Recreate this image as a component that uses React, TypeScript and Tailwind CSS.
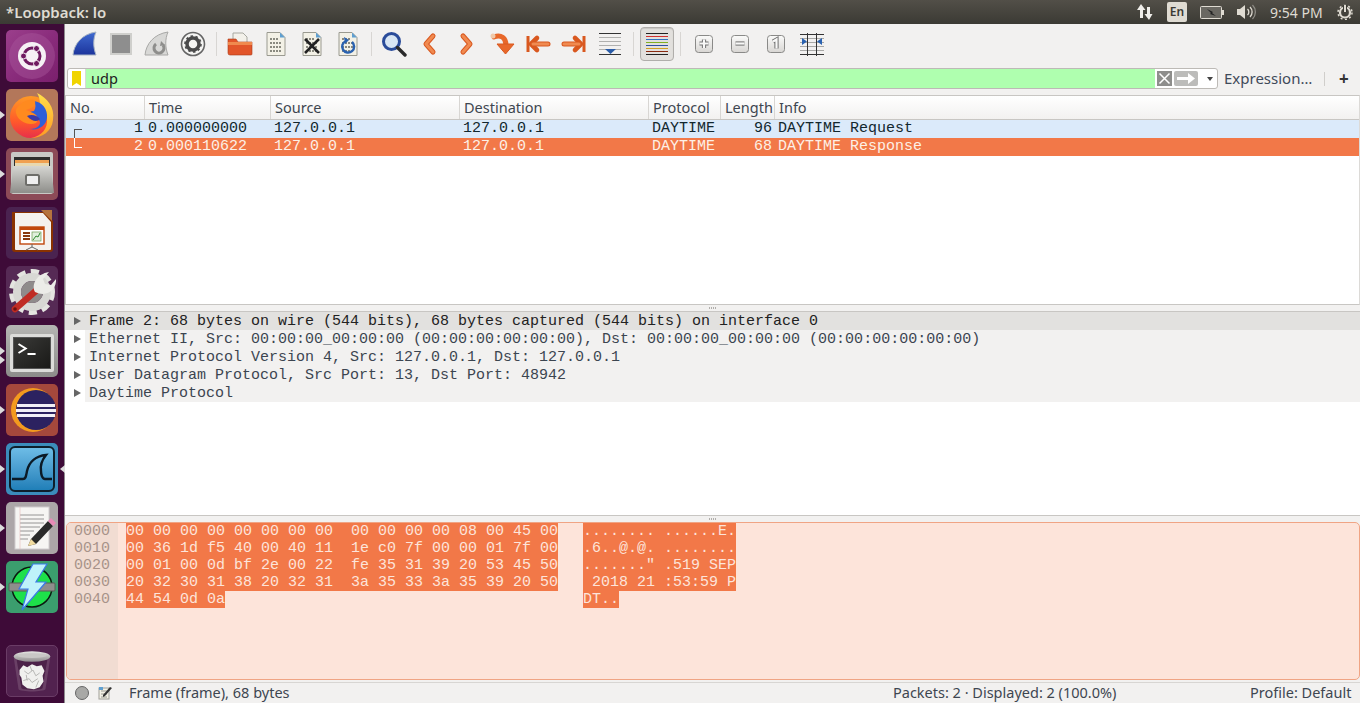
import type { ReactNode } from "react";

const ui = "font-['Noto_Sans',sans-serif]";
const mono = "font-['Liberation_Mono',monospace]";

function Tile({ bg, markL, markR, double, children }: { bg: string; markL?: boolean; markR?: boolean; double?: boolean; children: ReactNode }) {
  return (
    <div className="relative h-[52px] w-[52px] ml-[6px] shrink-0">
      <div className={`h-full w-full rounded-[5px] overflow-hidden ${bg}`}>{children}</div>
      {markL && (
        <span className={`absolute -left-[6px] top-[22px] flex flex-col gap-[1px]`}>
          <span className="block h-0 w-0 border-y-[4px] border-l-[5px] border-y-transparent border-l-[#dcdcdc]" />
          {double && <span className="block h-0 w-0 border-y-[4px] border-l-[5px] border-y-transparent border-l-[#dcdcdc]" />}
        </span>
      )}
      {markR && <span className="absolute -right-[7px] top-[22px] block h-0 w-0 border-y-[4px] border-r-[5px] border-y-transparent border-r-[#dcdcdc]" />}
    </div>
  );
}

function Launcher() {
  return (
    <div className="w-[65px] shrink-0 bg-[#3e0b38] border-r border-[#8e8a8e] flex flex-col gap-[7px] pt-[6px] pb-[6px]">
      <Tile bg="bg-gradient-to-br from-[#9b3f8c] via-[#8a2c7c] to-[#7a1f6c]">
        <svg viewBox="0 0 52 52" className="h-full w-full">
          <circle cx="26" cy="26" r="23" fill="#a9569c" opacity=".45" />
          <circle cx="26" cy="26" r="14" fill="#f6f1f5" />
          <circle cx="26" cy="26" r="8" fill="none" stroke="#6f1a60" strokeWidth="3" />
          <circle cx="17.5" cy="26" r="3" fill="#6f1a60" stroke="#f6f1f5" />
          <circle cx="30.5" cy="18.5" r="3" fill="#6f1a60" stroke="#f6f1f5" />
          <circle cx="30.5" cy="33.5" r="3" fill="#6f1a60" stroke="#f6f1f5" />
        </svg>
      </Tile>
      <Tile bg="bg-[#b3775a]" markL>
        <svg viewBox="0 0 52 52" className="h-full w-full">
          <defs>
            <linearGradient id="ff" x1="0" y1="0" x2="0" y2="1">
              <stop offset="0" stopColor="#ff9a24" />
              <stop offset=".6" stopColor="#ff5a2a" />
              <stop offset="1" stopColor="#e8304a" />
            </linearGradient>
            <linearGradient id="ffy" x1="0" y1="0" x2="0" y2="1">
              <stop offset="0" stopColor="#ffe14a" />
              <stop offset="1" stopColor="#ff9a24" />
            </linearGradient>
          </defs>
          <circle cx="25" cy="28" r="21" fill="url(#ff)" />
          <path d="M31 4c10 5 18 14 16 27-1 11-11 18-22 18 11-2 17-10 16-19-1-6-4-10-7-12 0-5 0-9-3-14z" fill="url(#ffy)" />
          <path d="M28 12c8 1 14 8 13 17-1 8-9 13-17 11 8 0 12-5 9-9-3-3-8-3-12-1-1-4 2-8 7-8 2-3 2-7 0-10z" fill="#2f5fd8" />
          <path d="M15 15c3-3 8-5 13-4 3 3 0 7-3 8l-5 2 7 3c5 2 6 7 3 10-7 3-18-1-20-10-1-4 2-7 5-9z" fill="#ff8a1f" />
          <path d="M21 27c4-2 10-1 13 3-2 3-8 3-13-3z" fill="#3a3aa8" />
        </svg>
      </Tile>
      <Tile bg="bg-[#8c4a57]" markL>
        <svg viewBox="0 0 52 52" className="h-full w-full">
          <defs>
            <linearGradient id="cab" x1="0" y1="0" x2="0" y2="1">
              <stop offset="0" stopColor="#d6d6d2" />
              <stop offset="1" stopColor="#8e8e8a" />
            </linearGradient>
          </defs>
          <rect x="5" y="4" width="42" height="42" rx="2" fill="#c9c9c5" />
          <rect x="8" y="9" width="36" height="12" fill="#2e2e2c" />
          <rect x="9" y="12" width="34" height="3" fill="#f0a050" />
          <rect x="9" y="15" width="34" height="3" fill="#e8d8b0" />
          <path d="M7 18h38l3 27H4z" fill="url(#cab)" />
          <rect x="20" y="27" width="13" height="10" rx="1.5" fill="#efefef" stroke="#6e6e6a" strokeWidth="2" />
        </svg>
      </Tile>
      <Tile bg="bg-[#4a2350]">
        <svg viewBox="0 0 52 52" className="h-full w-full">
          <path d="M6 5h33l8 9v28a3 3 0 0 1-3 3H9a3 3 0 0 1-3-3z" fill="#8a3200" />
          <path d="M9 6h28l8 9v27a1 1 0 0 1-1 1H10a1 1 0 0 1-1-1z" fill="#f4f1ee" />
          <path d="M35 3h11v11z" fill="#b5733e" />
          <rect x="14" y="20" width="24" height="17" fill="#fff" stroke="#c0470c" strokeWidth="1.4" />
          <rect x="14" y="20" width="24" height="3" fill="#c0470c" />
          <path d="M17 26h7M17 29h7M17 32h7" stroke="#8a3a10" strokeWidth="2" />
          <rect x="26" y="25" width="9" height="9" fill="#e0efdc" stroke="#6a9a50" strokeWidth=".7" />
          <path d="M27 33l3-4 2 1 2-4" fill="none" stroke="#2f8a2f" />
          <path d="M26 37v3m0 0l-6 3m6-3l6 3" stroke="#666" />
        </svg>
      </Tile>
      <Tile bg="bg-[#562a55]">
        <svg viewBox="0 0 52 52" className="h-full w-full">
          <circle cx="26" cy="26" r="20" fill="none" stroke="#e4e4e0" strokeWidth="6" strokeDasharray="8 5.2" />
          <circle cx="26" cy="26" r="15" fill="none" stroke="#d8d8d4" strokeWidth="8" />
          <circle cx="26" cy="26" r="11" fill="#8f8b8b" />
          <path d="M9 43l23-20" stroke="#c02c24" strokeWidth="6.5" strokeLinecap="round" />
          <path d="M29 26c-4-8 2-18 14-20l-6 7 2 5 6 1 5-6c1 10-9 19-21 13z" fill="#ecece8" />
          <circle cx="9" cy="43" r="1.8" fill="#6a1210" />
        </svg>
      </Tile>
      <Tile bg="bg-gradient-to-b from-[#b5b5b3] to-[#8c8c8a]" markL double>
        <div className="m-[4px] mt-[9px] h-[38px] rounded-[2px] bg-[#dcdcda] p-[3px]">
          <div className="h-full w-full bg-gradient-to-br from-[#3a3a38] to-[#1a1a18] relative border border-[#555]">
            <svg viewBox="0 0 40 28" className="h-full w-full">
              <path d="M5 4l8 5-8 5" fill="none" stroke="#fff" strokeWidth="2.2" />
              <path d="M15 15h9" stroke="#fff" strokeWidth="2.2" />
            </svg>
          </div>
        </div>
      </Tile>
      <Tile bg="bg-[#a5483c]" markL>
        <svg viewBox="0 0 52 52" className="h-full w-full">
          <circle cx="27" cy="26" r="22" fill="#f39a1e" />
          <circle cx="30" cy="26" r="20" fill="#2c2260" />
          <path d="M11 20h38v3H11zM10 25h40v3H10zM11 30h38v3H11z" fill="#f1eff5" />
        </svg>
      </Tile>
      <Tile bg="bg-[#3b8cbb]" markL markR>
        <div className="m-[3px] h-[46px] rounded-[6px] bg-gradient-to-b from-[#6dbce6] to-[#1f7fb8] border-[2px] border-[#0d1f2c]">
          <svg viewBox="0 0 42 42" className="h-full w-full">
            <path d="M1 31h11c3 0 3-3 4-8 2-9 9-15 19-16-4 5-6 10-5 16 0 3 1 8 4 8h7" fill="none" stroke="#0b1a26" strokeWidth="2.4" />
          </svg>
        </div>
      </Tile>
      <Tile bg="bg-[#aca6a8]" markL>
        <svg viewBox="0 0 52 52" className="h-full w-full">
          <rect x="9" y="5" width="34" height="42" fill="#f6f5f3" stroke="#d0ccce" />
          <path d="M14 13h24M14 17h24M14 21h24M14 25h20M14 29h14M14 33h10M14 37h8" stroke="#8a8a8a" strokeWidth=".9" />
          <path d="M14 5v42" stroke="#e8b8b8" strokeWidth=".6" />
          <path d="M25 37L42 19l5 5-17 18-8 2z" fill="#2a2a2a" />
          <path d="M42 19l3-3 5 5-3 3z" fill="#e88ab8" />
          <path d="M25 37l5 5-8 2z" fill="#f2dca0" />
        </svg>
      </Tile>
      <Tile bg="bg-[#3b9e6e]" markL>
        <svg viewBox="0 0 52 52" className="h-full w-full">
          <circle cx="26" cy="26" r="20" fill="#1ee04a" stroke="#0a1a10" strokeWidth="1.5" />
          <rect x="3" y="22" width="46" height="8" rx="1" fill="#8e8e8c" stroke="#5a5a58" />
          <path d="M27 3h14L30 21h10L16 49l6-21H13z" fill="#bff2fa" stroke="#3a7ae8" strokeWidth="1.2" />
        </svg>
      </Tile>
      <div className="mt-auto">
        <Tile bg="bg-[#52224f] border border-[#6a3c66]">
          <svg viewBox="0 0 52 52" className="h-full w-full">
            <defs>
              <linearGradient id="rim" x1="0" y1="0" x2="0" y2="1">
                <stop offset="0" stopColor="#e6e6e4" />
                <stop offset="1" stopColor="#8e8a8c" />
              </linearGradient>
            </defs>
            <path d="M7 12l5 33c2 3 26 3 28 0l5-33z" fill="#6a4066" />
            <path d="M10 14l5 30c2 2 20 2 22 0l5-30z" fill="#4c2249" />
            <ellipse cx="26" cy="11" rx="19" ry="5.5" fill="url(#rim)" />
            <ellipse cx="26" cy="10" rx="15" ry="2.5" fill="#c9c7c6" />
            <path d="M13 25l4-5 4 2 5-3 5 2 5-1 3 6-2 5 1 6-4 6-6 2-7-1-5-4-1-7-2-3z" fill="#f0f0ee" />
            <path d="M18 26l4 3 5-4 3 6 4-3M17 36l6-2 3 4 6-4M24 21l2 5M33 36l-3 7M20 30l1 6" stroke="#b5b5b3" fill="none" />
          </svg>
        </Tile>
      </div>
    </div>
  );
}

function Sep({ w }: { w: string }) {
  return (
    <div className={`${w} flex justify-center shrink-0`}>
      <div className="h-[24px] w-px bg-[#d8d6d3]" />
    </div>
  );
}

function Btn({ children, active }: { children: ReactNode; active?: boolean }) {
  return (
    <div className="w-9 shrink-0 flex justify-center">
      <div className={`h-[34px] w-[34px] flex items-center justify-center rounded-[4px] ${active ? "border border-[#b0aeab] bg-[#e2e0dd] shadow-[inset_0_1px_1px_#c8c6c3]" : ""}`}>
        {children}
      </div>
    </div>
  );
}

function Ico({ children, size = 26 }: { children: ReactNode; size?: number }) {
  return (
    <svg width={size} height={size} viewBox={`0 0 ${size} ${size}`}>
      {children}
    </svg>
  );
}

// double stroke gives the outlined orange look of the nav arrows
function NavStroke({ d }: { d: string }) {
  return (
    <>
      <path d={d} fill="none" stroke="#d9581f" strokeWidth="5" strokeLinecap="round" strokeLinejoin="round" />
      <path d={d} fill="none" stroke="#f08a50" strokeWidth="3" strokeLinecap="round" strokeLinejoin="round" />
    </>
  );
}

function DocIcon({ children }: { children?: ReactNode }) {
  return (
    <Ico>
      <path d="M4 1.5h13l5 5v18H4z" fill="#f3f1e6" stroke="#9a9a90" />
      <path d="M17 1.5l5 5h-5z" fill="#5f9fd0" />
      <path d="M7 8h9M7 12h12M7 16h12M7 20h12" stroke="#8a8a80" strokeWidth="2" strokeDasharray="2 1" />
      {children}
    </Ico>
  );
}

function SmallKey({ d }: { d: string }) {
  return (
    <Ico size={20}>
      <defs>
        <linearGradient id="key" x1="0" y1="0" x2="0" y2="1">
          <stop offset="0" stopColor="#fbfbfa" />
          <stop offset="1" stopColor="#d8d6d3" />
        </linearGradient>
      </defs>
      <rect x="1.5" y="1.5" width="17" height="17" rx="3" fill="url(#key)" stroke="#8a8a88" />
      <path d={d} fill="none" stroke="#707070" strokeWidth="4.2" />
      <path d={d} fill="none" stroke="#f8f8f7" strokeWidth="2.2" />
    </Ico>
  );
}

function Toolbar() {
  return (
    <div className="h-[44px] shrink-0 flex items-center pl-[2px] pb-[4px] bg-[#f2f1f0]">
      <Btn>
        <Ico>
          <defs>
            <linearGradient id="sh" x1="0" y1="0" x2="0" y2="1">
              <stop offset="0" stopColor="#3f6ad0" />
              <stop offset="1" stopColor="#1c349c" />
            </linearGradient>
          </defs>
          <path d="M1 24C2 13 10 3 24 1c-3 7-3 15 0 23z" fill="url(#sh)" stroke="#a8b4c4" />
        </Ico>
      </Btn>
      <Btn>
        <div className="h-[22px] w-[22px] bg-[#8e8e8e] border-2 border-[#cfcfcc]" />
      </Btn>
      <Btn>
        <Ico>
          <path d="M1 24C2 13 10 3 24 1c-3 7-3 15 0 23z" fill="#d8d8d6" stroke="#a8a8a6" />
          <path d="M12 13a5 5 0 1 0 7 1" fill="none" stroke="#8e8e8c" strokeWidth="3" />
          <path d="M17 10l4 4-5 1z" fill="#8e8e8c" />
        </Ico>
      </Btn>
      <Btn>
        <Ico>
          <circle cx="13" cy="13" r="11.5" fill="#f5f5f3" stroke="#666" strokeWidth="1.6" />
          <circle cx="13" cy="13" r="6" fill="none" stroke="#4a4a4a" strokeWidth="3.5" />
          <circle cx="13" cy="13" r="8" fill="none" stroke="#4a4a4a" strokeWidth="1.6" strokeDasharray="2.5 2.5" />
        </Ico>
      </Btn>
      <Sep w="w-[11px]" />
      <Btn>
        <Ico>
          <path d="M6 2h10l4 4v8H6z" fill="#f3f1ea" stroke="#a8a8a0" />
          <path d="M1 8h8l2 3h14v12a1 1 0 0 1-1 1H3a2 2 0 0 1-2-2z" fill="#e2562a" stroke="#a83a18" strokeWidth=".6" />
          <path d="M1 11h24v3H1z" fill="#f08a4e" />
        </Ico>
      </Btn>
      <Btn>
        <DocIcon />
      </Btn>
      <Btn>
        <DocIcon>
          <path d="M6 8l14 14M20 8L6 22" stroke="#222" strokeWidth="2.6" />
        </DocIcon>
      </Btn>
      <Btn>
        <DocIcon>
          <path d="M17 11a6 6 0 1 1-6-1" fill="none" stroke="#2a62b0" strokeWidth="2.4" />
          <path d="M9 6l5 3-4 4z" fill="#2a62b0" />
        </DocIcon>
      </Btn>
      <Sep w="w-[10px]" />
      <Btn>
        <Ico>
          <circle cx="10.5" cy="10.5" r="8" fill="#d8e6f4" stroke="#2a4c9a" strokeWidth="3" />
          <path d="M16.5 16.5L24 24" stroke="#2a2a2a" strokeWidth="3.4" strokeLinecap="round" />
        </Ico>
      </Btn>
      <Btn>
        <Ico>
          <NavStroke d="M16 5l-7 8 7 8" />
        </Ico>
      </Btn>
      <Btn>
        <Ico>
          <NavStroke d="M10 5l7 8-7 8" />
        </Ico>
      </Btn>
      <Btn>
        <Ico>
          <path d="M5 6c7-3 12 1 12 8" fill="none" stroke="#e8682a" strokeWidth="5" strokeLinecap="round" />
          <path d="M8 13h17l-8.500 10z" fill="#e8682a" stroke="#d9581f" strokeLinejoin="round" />
          <circle cx="4" cy="5" r="2.5" fill="#f0c8a8" />
        </Ico>
      </Btn>
      <Btn>
        <Ico>
          <path d="M3 5v16" stroke="#d9581f" strokeWidth="3" />
          <path d="M12 7l-6 6 6 6" fill="none" stroke="#d9581f" strokeWidth="4.6" strokeLinejoin="round" strokeLinecap="round" />
          <NavStroke d="M8 13h15" />
        </Ico>
      </Btn>
      <Btn>
        <Ico>
          <path d="M23 5v16" stroke="#d9581f" strokeWidth="3" />
          <path d="M14 7l6 6-6 6" fill="none" stroke="#d9581f" strokeWidth="4.6" strokeLinejoin="round" strokeLinecap="round" />
          <NavStroke d="M3 13h15" />
        </Ico>
      </Btn>
      <Btn>
        <Ico>
          <path d="M2 2.5h22" stroke="#333" />
          <path d="M2 6.5h22M2 10.5h22M2 14.5h22M2 18.5h22" stroke="#b0b0ae" />
          <path d="M2 23.5h22" stroke="#333" />
          <path d="M8 18h11l-5.5 5z" fill="#2a5ca8" />
        </Ico>
      </Btn>
      <Sep w="w-[11px]" />
      <Btn active>
        <Ico>
          <path d="M2 2.500h22" stroke="#222" />
          <path d="M2 5.500h22" stroke="#d03030" />
          <path d="M2 8.500h22" stroke="#3070c0" />
          <path d="M2 11.500h22" stroke="#80b020" />
          <path d="M2 14.500h22" stroke="#3050a0" />
          <path d="M2 17.500h22" stroke="#d0a020" />
          <path d="M2 20.500h22" stroke="#8a2a10" />
          <path d="M2 23.500h22" stroke="#222" />
        </Ico>
      </Btn>
      <Sep w="w-[11px]" />
      <Btn>
        <SmallKey d="M10 5.500v8.500M5.500 9.500h9" />
      </Btn>
      <Btn>
        <SmallKey d="M5.500 9.500h9" />
      </Btn>
      <Btn>
        <SmallKey d="M7 7.500l3.500-2v9" />
      </Btn>
      <Btn>
        <Ico>
          <path d="M1 3.5h24" stroke="#333" />
          <path d="M1 7.500h24M1 11.500h24M1 15.500h24M1 19.500h24" stroke="#a8a8a6" />
          <path d="M1 23.500h24" stroke="#333" />
          <path d="M8.5 2v23M17.5 2v23" stroke="#333" />
          <path d="M3 7v7l5-3.5zM23 7v7l-5-3.5z" fill="#2a62b0" />
        </Ico>
      </Btn>
    </div>
  );
}

function FilterBar() {
  return (
    <div className={`h-[21px] shrink-0 flex items-center pl-[2px] bg-[#f2f1f0] ${ui}`}>
      <div className="h-[21px] w-[1151px] shrink-0 flex items-stretch rounded-[3px] border border-[#bdbab6] bg-white overflow-hidden">
        <div className="w-[18px] shrink-0 flex items-center justify-center border-r border-[#d8d8d8]">
          <svg width="9" height="15" viewBox="0 0 9 15">
            <path d="M0 0h9v15l-4.5-3L0 15z" fill="#f0d400" />
          </svg>
        </div>
        <div className="w-[1069px] shrink-0 bg-[#afffaf] pl-[5px] text-[14.500px] leading-[19px] text-[#222]">udp</div>
        <div className="flex items-center pl-[2px]">
          <div className="h-[15px] w-[15px] bg-[#8e8e8c] flex items-center justify-center">
            <svg width="13" height="13" viewBox="0 0 13 13">
              <path d="M1.5 1.5l10 10M11.5 1.5l-10 10" stroke="#fff" strokeWidth="1.5" />
            </svg>
          </div>
          <div className="ml-[2px] h-[15px] w-[24px] rounded-[2px] bg-[#bcbcba] flex items-center justify-center">
            <svg width="18" height="11" viewBox="0 0 18 11">
              <path d="M0 4h11V0l7 5.5-7 5.5V7H0z" fill="#fff" />
            </svg>
          </div>
          <div className="ml-[9px] h-0 w-0 border-x-[3px] border-t-[4px] border-x-transparent border-t-[#444]" />
        </div>
      </div>
      <span className="ml-[6px] w-[100px] shrink-0 text-[15px] text-[#3f4a5a] whitespace-nowrap">Expression…</span>
      <div className="h-[14px] w-px bg-[#d0cecb]" />
      <span className="ml-[14px] text-[17px] font-bold leading-none text-[#333]">+</span>
    </div>
  );
}

const cols = "grid grid-cols-[79px_126px_189px_189px_72px_54px_1fr]";

const packets = [
  { no: "1", time: "0.000000000", proto: "DAYTIME", len: "96", info: "DAYTIME Request", cls: "bg-[#dbeafa] text-[#12272e]" },
  { no: "2", time: "0.000110622", proto: "DAYTIME", len: "68", info: "DAYTIME Response", cls: "bg-[#f27848] text-[#fdf0e6]" },
];

function PacketList() {
  const heads = ["No.", "Time", "Source", "Destination", "Protocol", "Length", "Info"];
  return (
    <div className="h-[210px] shrink-0 bg-white border border-[#c8c6c3] border-r-[#dcdad7] relative">
      <div className={`${cols} h-[24px] bg-gradient-to-b from-white to-[#f2f1f0] border-b border-[#c8c6c3] ${ui}`}>
        {heads.map((h, i) => (
          <div key={h} className={`pl-[4px] text-[14.500px] leading-[22px] text-[#3e4650] overflow-hidden whitespace-nowrap ${i < 6 ? "border-r border-[#d8d6d3]" : ""}`}>
            {h}
          </div>
        ))}
      </div>
      {packets.map((p) => (
        <div key={p.no} className={`${cols} h-[18px] text-[15px] leading-[18px] whitespace-pre ${mono} ${p.cls}`}>
          <div className="text-right pr-[2px]">{p.no}</div>
          <div className="pl-[3px]">{p.time}</div>
          <div className="pl-[3px]">127.0.0.1</div>
          <div className="pl-[3px]">127.0.0.1</div>
          <div className="pl-[3px]">{p.proto}</div>
          <div className="text-right pr-[3px]">{p.len}</div>
          <div className="pl-[3px]">{p.info}</div>
        </div>
      ))}
      <div className="absolute left-[8px] top-[33px] h-[9px] w-[8px] border-l border-t border-[#555]" />
      <div className="absolute left-[8px] top-[42px] h-[10px] w-[8px] border-l border-b border-white" />
    </div>
  );
}

function Splitter() {
  return (
    <div className="h-[6px] shrink-0 bg-[#f2f1f0] flex items-center justify-center">
      <div className="h-[2px] w-[8px] bg-[repeating-linear-gradient(90deg,#b0aeab_0_1px,transparent_1px_2px)]" />
    </div>
  );
}

function Details() {
  const rows = [
    "Frame 2: 68 bytes on wire (544 bits), 68 bytes captured (544 bits) on interface 0",
    "Ethernet II, Src: 00:00:00_00:00:00 (00:00:00:00:00:00), Dst: 00:00:00_00:00:00 (00:00:00:00:00:00)",
    "Internet Protocol Version 4, Src: 127.0.0.1, Dst: 127.0.0.1",
    "User Datagram Protocol, Src Port: 13, Dst Port: 48942",
    "Daytime Protocol",
  ];
  return (
    <div className={`h-[205px] shrink-0 bg-white border-y border-[#c8c6c3] text-[15px] ${mono}`}>
      {rows.map((r, i) => (
        <div key={r} className={`h-[18px] flex items-center ${i === 0 ? "bg-[#e2e1df] text-[#222]" : "text-[#3c4550]"}`}>
          <div className="w-[20px] h-full shrink-0 flex items-center pl-[9px]">
            <span className="block h-0 w-0 border-y-[4px] border-l-[7px] border-y-transparent border-l-[#666]" />
          </div>
          <div className={`flex-1 h-full pl-[4px] pt-[1px] leading-[18px] whitespace-pre ${i === 0 ? "" : "bg-[#f2f1f0]"}`}>{r}</div>
        </div>
      ))}
    </div>
  );
}

const hexRows = [
  { off: "0000", hex: "00 00 00 00 00 00 00 00  00 00 00 00 08 00 45 00", asc: "........ ......E." },
  { off: "0010", hex: "00 36 1d f5 40 00 40 11  1e c0 7f 00 00 01 7f 00", asc: ".6..@.@. ........" },
  { off: "0020", hex: "00 01 00 0d bf 2e 00 22  fe 35 31 39 20 53 45 50", asc: '......." .519 SEP' },
  { off: "0030", hex: "20 32 30 31 38 20 32 31  3a 35 33 3a 35 39 20 50", asc: " 2018 21 :53:59 P" },
  { off: "0040", hex: "44 54 0d 0a", asc: "DT.." },
];

function HexPane() {
  return (
    <div className={`h-[158px] shrink-0 ml-[1px] rounded-[5px] border border-[#f0a484] bg-[#fde4da] overflow-hidden flex text-[15px] ${mono}`}>
      <div className="w-[51px] shrink-0 bg-[#f1dcd2] text-[#a8938a] pl-[7px]">
        {hexRows.map((r) => (
          <div key={r.off} className="h-[17px] leading-[17px]">{r.off}</div>
        ))}
      </div>
      <div className="pl-[8px] text-[#fde4da] whitespace-pre">
        {hexRows.map((r) => (
          <div key={r.off} className="h-[17px] leading-[17px] flex">
            <span className="w-[432px] shrink-0"><span className="inline-block bg-[#f27848]">{r.hex}</span></span>
            <span className="ml-[25px] inline-block bg-[#f27848]">{r.asc}</span>
          </div>
        ))}
      </div>
    </div>
  );
}

function StatusBar() {
  return (
    <div className={`h-[21px] shrink-0 mt-[2px] bg-[#f2f1f0] border-t border-[#d8d6d3] flex items-center text-[14.500px] text-[#3e4650] whitespace-nowrap ${ui}`}>
      <div className="ml-[10px] h-[14px] w-[14px] rounded-full bg-[#a8a8a6] border border-[#666]" />
      <svg width="14" height="14" viewBox="0 0 14 14" className="ml-[9px]">
        <rect x="1" y="2" width="10" height="11" fill="#f3f1e6" stroke="#a0a098" />
        <path d="M3 5h6M3 8h6M3 11h6" stroke="#9a9a90" />
        <path d="M5 9l7-8 2 1-7 8-2 1z" fill="#333" />
        <rect x="1" y="1" width="4" height="3" fill="#5f9fd0" />
      </svg>
      <span className="ml-[17px] w-[764px] shrink-0">Frame (frame), 68 bytes</span>
      <span className="w-[357px] shrink-0">Packets: 2 · Displayed: 2 (100.0%)</span>
      <span>Profile: Default</span>
    </div>
  );
}

function TopBar() {
  return (
    <div className={`h-[24px] shrink-0 bg-gradient-to-b from-[#524f48] to-[#3b3a34] flex items-center pl-[6px] pr-[7px] ${ui}`}>
      <span className="text-[15px] font-semibold text-[#dfdbd2] whitespace-nowrap">*Loopback: lo</span>
      <div className="ml-auto flex items-center text-[#dfdbd2]">
        <svg width="18" height="18" viewBox="0 0 18 18">
          <path d="M5 1l4.5 6H7v8H4V7H1zM13 17l-4.5-6H11V4h3v7h2.5z" fill="#f0eeea" />
        </svg>
        <div className="ml-[13px] h-[20px] w-[20px] rounded-[2px] bg-[#dfdbd2] text-[#3b3a34] text-[12px] font-semibold leading-[20px] text-center">En</div>
        <svg width="25" height="13" viewBox="0 0 25 13" className="ml-[13px]">
          <rect x=".5" y=".5" width="21" height="12" rx="1" fill="#6a6862" stroke="#dfdbd2" />
          <rect x="22" y="4" width="2" height="5" fill="#dfdbd2" />
          <path d="M7 3l6 3-1 1 4 3-6-2 1-1z" fill="#222" />
        </svg>
        <svg width="20" height="16" viewBox="0 0 20 16" className="ml-[11px]">
          <path d="M1 5h3l5-4v14l-5-4H1z" fill="#dfdbd2" />
          <path d="M11.5 5a4 4 0 0 1 0 6" fill="none" stroke="#dfdbd2" strokeWidth="1.3" />
          <path d="M14 3a7 7 0 0 1 0 10" fill="none" stroke="#dfdbd2" strokeWidth="1.3" />
          <path d="M16.5 1a10 10 0 0 1 0 14" fill="none" stroke="#8c8a84" strokeWidth="1.3" />
        </svg>
        <span className="ml-[14px] text-[14px] whitespace-nowrap w-[67px]">9:54 PM</span>
        <svg width="16" height="16" viewBox="0 0 16 16">
          <circle cx="8" cy="8.5" r="5" fill="none" stroke="#dfdbd2" strokeWidth="2.2" />
          <circle cx="8" cy="8.5" r="7" fill="none" stroke="#dfdbd2" strokeWidth="1.5" strokeDasharray="2 2.5" />
          <path d="M8 1v7" stroke="#3b3a34" strokeWidth="4" />
          <path d="M8 1v7" stroke="#dfdbd2" strokeWidth="2" />
        </svg>
      </div>
    </div>
  );
}

export default function App() {
  return (
    <div className="h-[703px] w-[1360px] overflow-hidden flex flex-col bg-[#f2f1f0]">
      <TopBar />
      <div className="flex flex-1 min-h-0">
        <Launcher />
        <div className="flex-1 min-w-0 flex flex-col">
          <Toolbar />
          <FilterBar />
          <div className="h-[6px] shrink-0" />
          <PacketList />
          <Splitter />
          <Details />
          <Splitter />
          <HexPane />
          <StatusBar />
        </div>
      </div>
    </div>
  );
}
